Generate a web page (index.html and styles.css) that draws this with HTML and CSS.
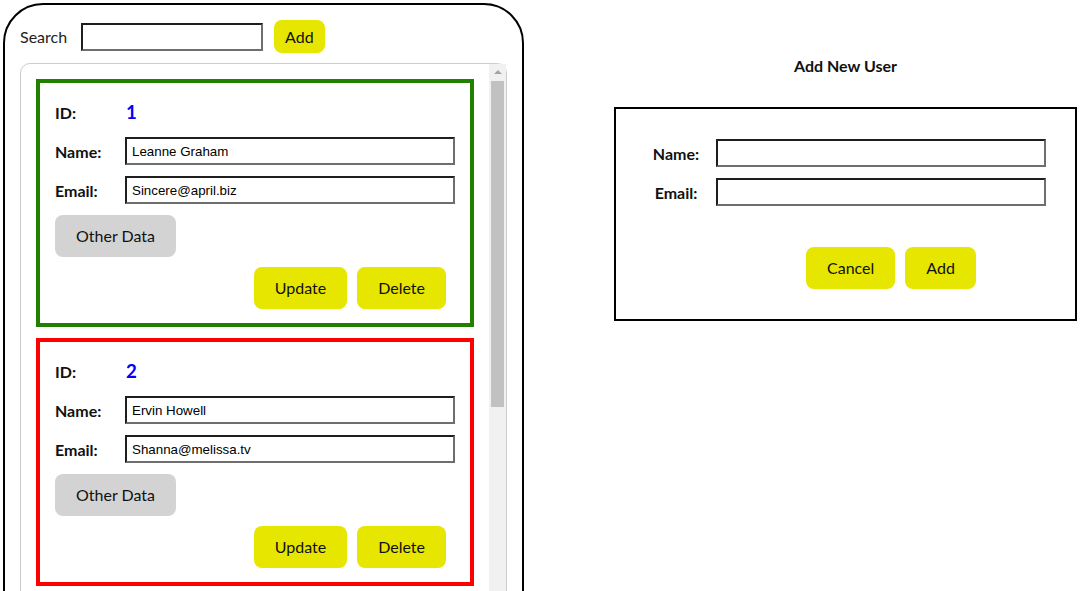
FILE: index.html
```html
<!DOCTYPE html>
<html lang="en">
<head>
  <meta charset="UTF-8">
  <meta name="viewport" content="width=device-width, initial-scale=1.0">
  <title>Users</title>
  <link rel="stylesheet" href="styles.css">
</head>
<body>
  <div class="page">
    <div class="phone">
      <div class="search-bar">
        <label for="search">Search</label>
        <input id="search" type="text">
        <button class="btn btn-add">Add</button>
      </div>
      <div class="user-list">
        <div class="user-scroll" id="user-scroll">
          <!-- user cards are built below -->
        </div>
        <div class="scrollbar">
          <span class="scroll-arrow"></span>
          <span class="scroll-thumb"></span>
        </div>
      </div>
    </div>

    <div class="add-panel">
      <h3>Add New User</h3>
      <div class="add-box">
        <div class="form-grid">
          <label for="new-name">Name:</label>
          <input id="new-name" type="text">
          <label for="new-email">Email:</label>
          <input id="new-email" type="text">
        </div>
        <div class="add-actions">
          <button class="btn">Cancel</button>
          <button class="btn">Add</button>
        </div>
      </div>
    </div>
  </div>

  <script>
  const users = [
    { id: 1, name: 'Leanne Graham', email: 'Sincere@april.biz' },
    { id: 2, name: 'Ervin Howell', email: 'Shanna@melissa.tv' }
  ];

  function renderUsers() {
    const list = document.getElementById('user-scroll');
    list.innerHTML = '';
    users.forEach((user, i) => {
      const card = document.createElement('div');
      card.className = 'user-card ' + (i % 2 === 0 ? 'done' : 'todo');
      card.innerHTML = `
        <div class="user-fields">
          <span class="field-label">ID:</span>
          <span class="user-id">${user.id}</span>
          <label class="field-label">Name:</label>
          <input type="text" value="${user.name}">
          <label class="field-label">Email:</label>
          <input type="text" value="${user.email}">
        </div>
        <button class="btn btn-gray">Other Data</button>
        <div class="card-actions">
          <button class="btn">Update</button>
          <button class="btn">Delete</button>
        </div>`;
      list.appendChild(card);
    });
  }

  renderUsers();
  </script>
</body>
</html>
```

FILE: styles.css
```css
/* Base Reset */
html, body, h3 {
  margin: 0;
  padding: 0;
}
html, body {
  overflow: hidden;
}
body {
  font-family: 'Lato', 'Segoe UI', sans-serif;
  font-size: 16px;
  color: #111;
  background: #fff;
}

input {
  box-sizing: border-box;
  height: 28px;
  padding: 0 5px;
  font-family: 'Liberation Sans', Arial, sans-serif;
  font-size: 13.333px;
  color: #000;
  border: 2px solid;
  border-color: #1e1e1e #6e6e6e #6e6e6e #1e1e1e;
  background: #fff;
}

/* Buttons */
.btn {
  border: none;
  border-radius: 8px;
  padding: 10px 21px;
  font-family: inherit;
  font-size: 16px;
  line-height: 22px;
  color: #111;
  background-color: #e6e600;
  cursor: pointer;
}
.btn-gray {
  background-color: #d3d3d3;
}
.btn-add {
  padding: 5px 11px;
  line-height: 23px;
}

/* Layout */
.page {
  display: flex;
  align-items: flex-start;
  gap: 90px;
  padding: 3px 6px 0 3px;
}

/* Left: user list */
.phone {
  width: 487px;
  padding: 15px;
  border: 2px solid #000;
  border-radius: 40px;
}

.search-bar {
  display: flex;
  align-items: center;
  height: 33px;
  margin-bottom: 10px;
}
.search-bar label {
  margin-right: 14px;
  color: #222;
}
.search-bar input {
  width: 182px;
  margin-right: 11px;
}

.user-list {
  display: flex;
  height: 940px;
  border: 1px solid #ccc;
  border-radius: 10px;
}

.user-scroll {
  flex: 1;
  display: flex;
  flex-direction: column;
  gap: 11px;
  padding: 15px;
  overflow: hidden;
}

/* Scrollbar look-alike */
.scrollbar {
  width: 17px;
  display: flex;
  flex-direction: column;
  align-items: center;
  background: #f1f1f1;
}
.scroll-arrow {
  width: 0;
  height: 0;
  margin: 6px 0 7px;
  border: 4px solid transparent;
  border-top: 0;
  border-bottom-color: #a3a3a3;
}
.scroll-thumb {
  width: 13px;
  height: 326px;
  background: #c1c1c1;
}

.user-card {
  flex-shrink: 0;
  display: flex;
  flex-direction: column;
  align-items: flex-start;
  gap: 11px;
  padding: 15px 15px 14px;
  border: 4px solid;
}
.user-card.done {
  border-color: #228000;
}
.user-card.todo {
  border-color: #ff0000;
}

.user-fields {
  display: grid;
  grid-template-columns: 70px 330px;
  grid-auto-rows: 28px;
  row-gap: 11px;
  align-items: center;
}
.field-label {
  font-weight: bold;
}
.user-id {
  padding-left: 1px;
  font-size: 18.7px;
  font-weight: bold;
  color: #0000ff;
}

.card-actions {
  align-self: stretch;
  display: flex;
  justify-content: flex-end;
  gap: 10px;
  margin-top: -1px;
  padding-right: 9px;
}

/* Right: add form */
.add-panel {
  width: 463px;
}
.add-panel h3 {
  margin: 53px 0 31px;
  font-size: 16px;
  line-height: 20px;
  text-align: center;
}

.add-box {
  padding: 30px 0 30px 20px;
  border: 2px solid #000;
}

.form-grid {
  display: grid;
  grid-template-columns: 80px 330px;
  grid-auto-rows: 28px;
  row-gap: 11px;
  align-items: center;
}
.form-grid label {
  font-weight: bold;
  text-align: center;
}

.add-actions {
  display: flex;
  gap: 10px;
  margin: 41px 0 0 170px;
}
```
